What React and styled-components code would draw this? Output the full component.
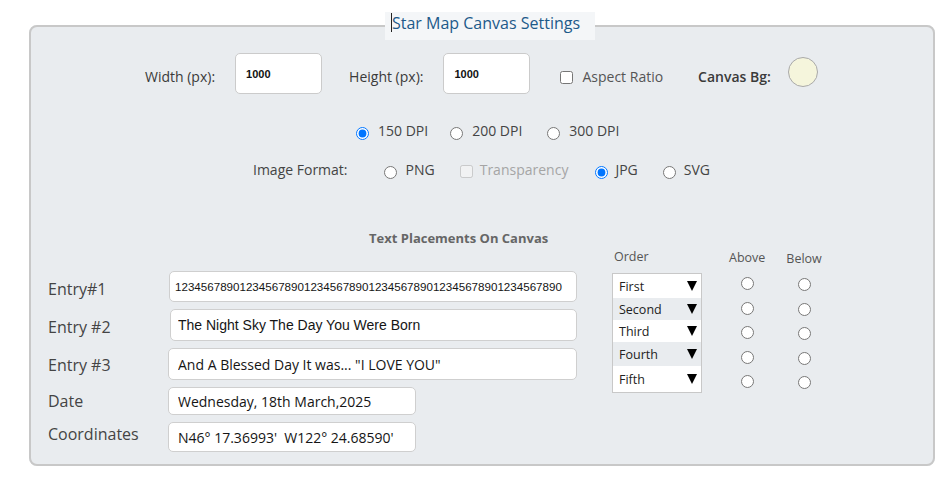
import React from "react";
import styled, { createGlobalStyle } from "styled-components";

const GlobalStyle = createGlobalStyle`
  html, body { margin: 0; padding: 0; background: #fff; }
  body { font-family: "Open Sans", "DejaVu Sans", sans-serif; }
  * { box-sizing: border-box; }
`;

const Page = styled.div`
  padding: 12px 16px 23px 29px;
`;

const Panel = styled.fieldset`
  margin: 0;
  padding: 0;
  min-width: 0;
  height: 454px;
  border: 2px solid #c8c8c8;
  border-radius: 8px;
  background: #e9ecef;
`;

const Legend = styled.legend`
  margin-left: 354px;
  padding: 0 15px 6px 6px;
  background: #f4f6f8;
  font-size: 16px;
  line-height: 22px;
  color: #1d5a8a;
  white-space: nowrap;
`;

const Caret = styled.span`
  display: inline-block;
  width: 1px;
  height: 19px;
  background: #222;
  vertical-align: -3px;
`;

const Row = styled.div`
  display: flex;
  align-items: center;
  height: ${(p) => p.$h}px;
  margin-top: ${(p) => p.$mt}px;
  padding-left: ${(p) => p.$pl}px;
`;

const Label = styled.span`
  font-size: 14px;
  line-height: 20px;
  white-space: nowrap;
  color: ${(p) => p.$color || "#444"};
  font-weight: ${(p) => p.$weight || 400};
  margin-left: ${(p) => p.$ml || 0}px;
  margin-top: ${(p) => p.$dy || 0}px;
`;

const SizeInput = styled.input`
  width: 87px;
  height: 41px;
  border: 1px solid #cbcbcb;
  border-radius: 5px;
  background: #fff;
  padding: 0 0 0 10px;
  font: 600 11px "Liberation Sans", Arial, sans-serif;
  color: #111;
  outline: none;
  margin: 0 0 0 ${(p) => p.$ml || 0}px;
`;

const Check = styled.input.attrs({ type: "checkbox" })`
  width: 13px;
  height: 13px;
  margin: ${(p) => p.$dy ?? 2}px 0 0 ${(p) => p.$ml || 0}px;
`;

const Radio = styled.input.attrs({ type: "radio" })`
  width: 13px;
  height: 13px;
  margin: 4px 0 0 ${(p) => p.$ml || 0}px;
`;

const Swatch = styled.div`
  width: 30px;
  height: 30px;
  border-radius: 50%;
  background: #f5f5dc;
  border: 1px solid #a9a9a9;
  margin: -4px 0 0 ${(p) => p.$ml || 0}px;
`;

const SectionTitle = styled.div`
  margin-top: 50px;
  padding-left: 338px;
  font-size: 13px;
  line-height: 16px;
  font-weight: 700;
  color: #666;
`;

const Bottom = styled.div`
  display: flex;
  align-items: flex-start;
  margin-top: 2px;
  padding-left: 17px;
`;

const EntryGrid = styled.div`
  display: grid;
  grid-template-columns: 120px auto;
  row-gap: 7px;
  align-items: center;
  margin-top: 23px;
`;

const EntryLabel = styled.label`
  font-size: 16px;
  line-height: 22px;
  color: #444;
  white-space: nowrap;
  margin-top: ${(p) => p.$dy || 0}px;
`;

const TextInput = styled.input`
  width: ${(p) => p.$w}px;
  height: ${(p) => p.$h}px;
  margin: 0 0 0 ${(p) => p.$ml || 0}px;
  padding: 0 0 0 ${(p) => p.$pl}px;
  border: 1px solid #cfcfcf;
  border-radius: 5px;
  background: #fff;
  color: #151515;
  outline: none;
  font-size: ${(p) => p.$size}px;
  font-family: ${(p) =>
    p.$arial ? '"Liberation Sans", Arial, sans-serif' : '"Open Sans", sans-serif'};
`;

const OrderCol = styled.div`
  display: flex;
  flex-direction: column;
  margin-left: 35px;
`;

const ColHead = styled.div`
  font-size: 12.5px;
  line-height: 18px;
  color: #555;
  white-space: nowrap;
  padding-left: ${(p) => p.$pl || 0}px;
  padding-top: ${(p) => p.$pt || 0}px;
`;

const SelectList = styled.div`
  margin-top: 7px;
  width: 90px;
  border: 1px solid #c8c8c8;
`;

const SelectRow = styled.div`
  display: flex;
  align-items: center;
  justify-content: space-between;
  height: ${(p) => p.$h}px;
  padding: 0 4px 0 6px;
  background: ${(p) => (p.$alt ? "#e9ecef" : "#fff")};
  font-size: 12.5px;
  color: #222;
`;

const Arrow = styled.span`
  width: 0;
  height: 0;
  border-left: 5.5px solid transparent;
  border-right: 5.5px solid transparent;
  border-top: 10px solid #000;
`;

const PosCol = styled.div`
  display: flex;
  flex-direction: column;
  align-items: center;
  margin-left: ${(p) => p.$ml}px;
`;

const RadioStack = styled.div`
  display: flex;
  flex-direction: column;
  gap: 11.5px;
  margin-top: 10px;
`;

const PlainRadio = styled.input.attrs({ type: "radio" })`
  width: 13px;
  height: 13px;
  margin: 0;
`;

const entries = [
  { label: "Entry#1", value: "1234567890".repeat(6), w: 408, h: 31, pl: 5, ml: 1, size: 11.6, arial: true, dy: 5 },
  { label: "Entry #2", value: "The Night Sky The Day You Were Born", w: 407, h: 32, pl: 7, ml: 2, size: 14, arial: true, dy: 4 },
  { label: "Entry #3", value: 'And A Blessed Day It was... "I LOVE YOU"', w: 409, h: 32, pl: 9, ml: 0, size: 14, dy: 2 },
  { label: "Date", value: "Wednesday, 18th March,2025", w: 248, h: 28, pl: 9, ml: 0, size: 14, dy: 0 },
  { label: "Coordinates", value: "N46° 17.36993'  W122° 24.68590'", w: 248, h: 30, pl: 9, ml: 0, size: 14, dy: -6 },
];

const orders = [
  { name: "First", h: 24 },
  { name: "Second", h: 22, alt: true },
  { name: "Third", h: 22 },
  { name: "Fourth", h: 24, alt: true },
  { name: "Fifth", h: 26 },
];

export default function App() {
  return (
    <>
      <GlobalStyle />
      <Page>
        <Panel>
          <Legend>
            <Caret />
            Star Map Canvas Settings
          </Legend>

          <Row $h={41} $mt={13} $pl={114}>
            <Label $color="#3a3a3a" $dy={6}>Width (px):</Label>
            <SizeInput defaultValue="1000" $ml={20} />
            <Label $color="#3a3a3a" $ml={27} $dy={6}>Height (px):</Label>
            <SizeInput defaultValue="1000" $ml={20} />
            <Check $ml={30} $dy={7} />
            <Label $color="#555" $ml={9} $dy={6}>Aspect Ratio</Label>
            <Label $color="#3a3a3a" $weight={600} $ml={35} $dy={6}>Canvas Bg:</Label>
            <Swatch $ml={17} />
          </Row>

          <Row $h={20} $mt={27} $pl={325}>
            <Radio name="dpi" defaultChecked />
            <Label $ml={9}>150 DPI</Label>
            <Radio name="dpi" $ml={22} />
            <Label $ml={9}>200 DPI</Label>
            <Radio name="dpi" $ml={25} />
            <Label $ml={9}>300 DPI</Label>
          </Row>

          <Row $h={20} $mt={19} $pl={222}>
            <Label>Image Format:</Label>
            <Radio name="fmt" $ml={36} />
            <Label $ml={9}>PNG</Label>
            <Check disabled $ml={25} />
            <Label $color="#a5a5a5" $ml={7}>Transparency</Label>
            <Radio name="fmt" defaultChecked $ml={27} />
            <Label $ml={7}>JPG</Label>
            <Radio name="fmt" $ml={25} />
            <Label $ml={8}>SVG</Label>
          </Row>

          <SectionTitle>Text Placements On Canvas</SectionTitle>

          <Bottom>
            <EntryGrid>
              {entries.map((e) => (
                <React.Fragment key={e.label}>
                  <EntryLabel $dy={e.dy}>{e.label}</EntryLabel>
                  <TextInput
                    defaultValue={e.value}
                    $w={e.w}
                    $h={e.h}
                    $pl={e.pl}
                    $ml={e.ml}
                    $size={e.size}
                    $arial={e.arial}
                  />
                </React.Fragment>
              ))}
            </EntryGrid>

            <OrderCol>
              <ColHead $pl={2}>Order</ColHead>
              <SelectList>
                {orders.map((o) => (
                  <SelectRow key={o.name} $h={o.h} $alt={o.alt}>
                    {o.name}
                    <Arrow />
                  </SelectRow>
                ))}
              </SelectList>
            </OrderCol>

            <PosCol $ml={27}>
              <ColHead $pt={1}>Above</ColHead>
              <RadioStack>
                {orders.map((o) => (
                  <PlainRadio key={o.name} name={`above-${o.name}`} />
                ))}
              </RadioStack>
            </PosCol>

            <PosCol $ml={21}>
              <ColHead $pt={2}>Below</ColHead>
              <RadioStack>
                {orders.map((o) => (
                  <PlainRadio key={o.name} name={`below-${o.name}`} />
                ))}
              </RadioStack>
            </PosCol>
          </Bottom>
        </Panel>
      </Page>
    </>
  );
}
